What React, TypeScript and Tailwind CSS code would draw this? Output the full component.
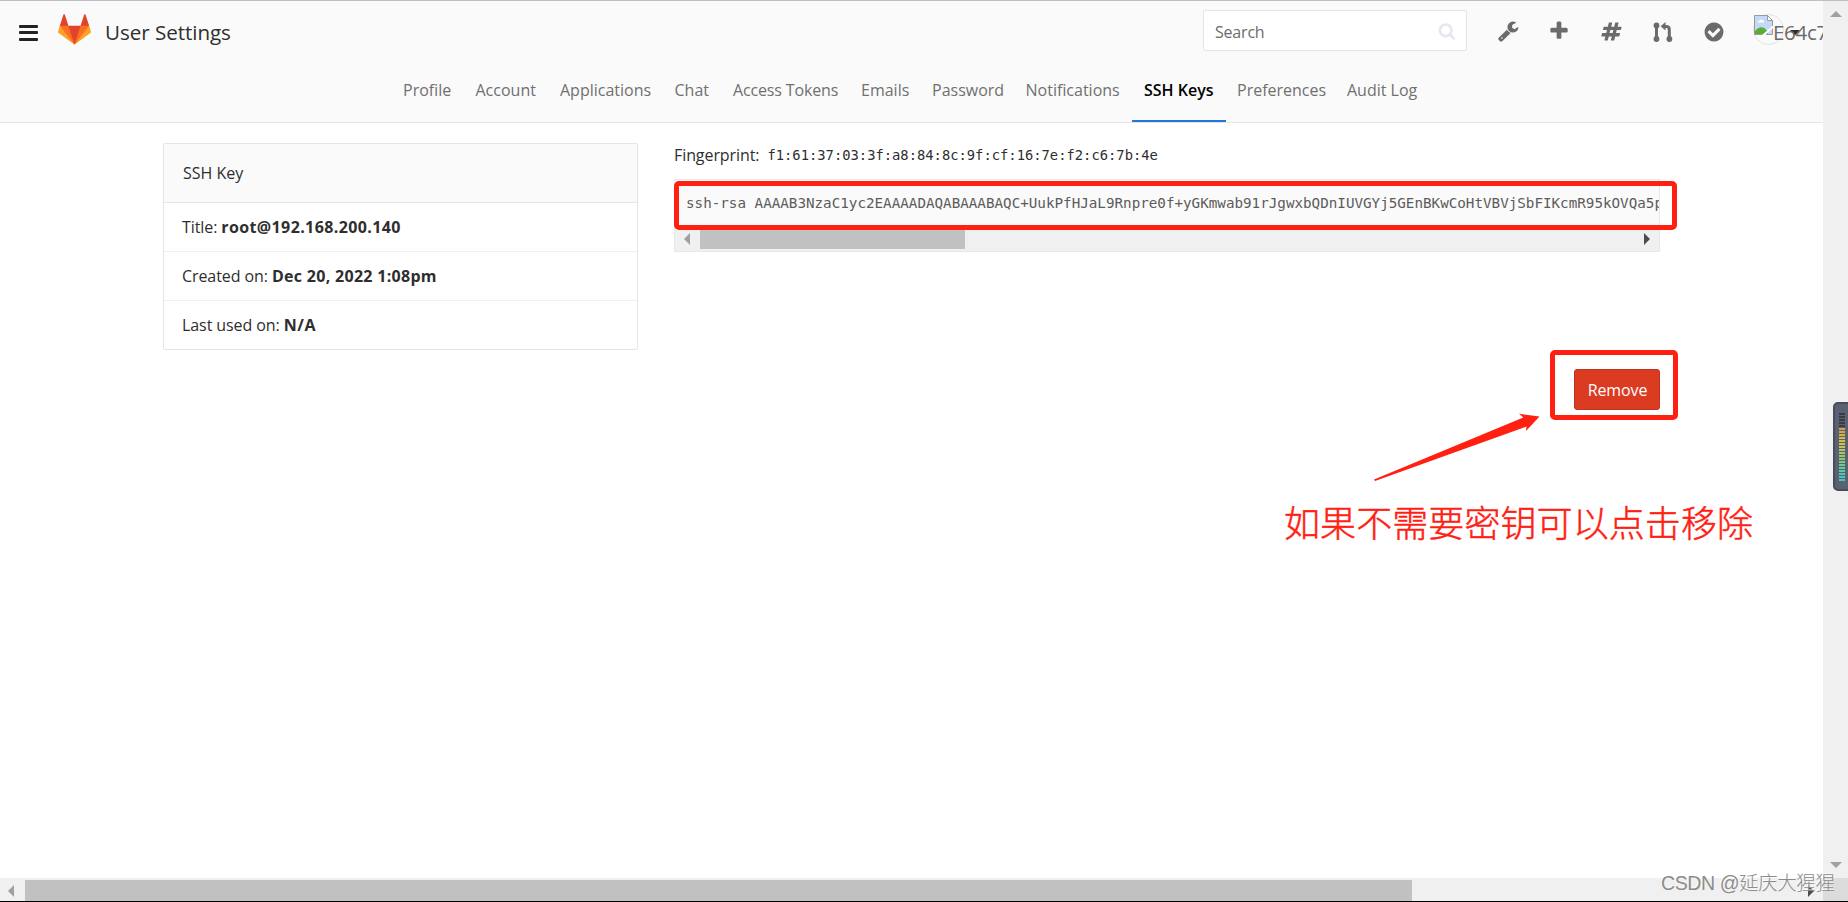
import type { ReactNode } from "react";

const tabs = [
  { label: "Profile", width: "w-[72.5px]" },
  { label: "Account", width: "w-[84.5px]" },
  { label: "Applications", width: "w-[114.5px]" },
  { label: "Chat", width: "w-[58.5px]" },
  { label: "Access Tokens", width: "w-[128px] tracking-[-0.15px]" },
  { label: "Emails", width: "w-[71px]" },
  { label: "Password", width: "w-[93.5px]" },
  { label: "Notifications", width: "w-[117.5px]" },
  { label: "SSH Keys", width: "w-[94px]", active: true },
  { label: "Preferences", width: "w-[110px]" },
  { label: "Audit Log", width: "w-[93px]" },
];

function Glyph({ d, className, box = "0 0 1792 1792" }: { d: string; className: string; box?: string }) {
  return (
    <svg viewBox={box} className={`shrink-0 ${className}`} fill="currentColor">
      <path d={d} />
    </svg>
  );
}

const WRENCH =
  "M384 1472q0-26-19-45t-45-19-45 19-19 45 19 45 45 19 45-19 19-45zm644-420l-682 682q-37 37-90 37-52 0-91-37l-106-108q-38-36-38-90 0-53 38-91l681-681q39 98 114.500 173.500t173.500 114.500zm634-435q0 39-23 106-47 134-164.500 217.500t-258.500 83.500q-185 0-316.500-131.500t-131.500-316.500 131.500-316.500 316.500-131.500q58 0 121.500 16.500t107.500 46.500q16 11 16 28t-16 28l-293 169v224l193 107q5-3 79-48.500t135.500-81 70.500-35.500q15 0 23.500 10t8.500 25z";
const PLUS =
  "M1600 736v192q0 40-28 68t-68 28h-416v416q0 40-28 68t-68 28h-192q-40 0-68-28t-28-68v-416h-416q-40 0-68-28t-28-68v-192q0-40 28-68t68-28h416v-416q0-40 28-68t68-28h192q40 0 68 28t28 68v416h416q40 0 68 28t28 68z";
const HASH =
  "M991 1024l64-256h-254l-64 256h254zm768-504l-56 224q-7 24-31 24h-327l-64 256h311q15 0 25 12 10 14 6 28l-56 224q-5 24-31 24h-327l-81 328q-7 24-31 24h-224q-16 0-26-12-9-12-6-28l78-312h-254l-81 328q-7 24-31 24h-225q-15 0-25-12-9-12-6-28l78-312h-311q-15 0-25-12-9-12-6-28l56-224q7-24 31-24h327l64-256h-311q-15 0-25-12-10-14-6-28l56-224q5-24 31-24h327l81-328q7-24 32-24h224q15 0 25 12 9 12 6 28l-78 312h254l81-328q7-24 32-24h224q15 0 25 12 9 12 6 28l-78 312h311q15 0 25 12 9 12 6 28z";
const CHECK =
  "M1412 734q0-28-18-46l-91-90q-19-19-45-19t-45 19l-408 407-226-226q-19-19-45-19t-45 19l-91 90q-18 18-18 46 0 27 18 45l362 362q19 19 45 19 27 0 46-19l543-543q18-18 18-45zm252 162q0 209-103 385.500t-279.500 279.500-385.500 103-385.500-103-279.500-279.500-103-385.500 103-385.500 279.500-279.500 385.500-103 385.500 103 279.500 279.500 103 385.500z";
const SEARCH =
  "M1216 832q0-185-131.500-316.500t-316.500-131.500-316.500 131.500-131.500 316.500 131.500 316.500 316.500 131.500 316.500-131.500 131.500-316.500zm512 832q0 52-38 90t-90 38q-54 0-90-38l-343-342q-179 124-399 124-143 0-273.500-55.500t-225-150-150-225-55.500-273.500 55.500-273.500 150-225 225-150 273.500-55.500 273.500 55.500 225 150 150 225 55.500 273.500q0 220-124 399l343 343q37 37 37 90z";

function Logo() {
  return (
    <svg viewBox="0 0 36 36" className="ml-5 h-[33px] w-[33px] shrink-0">
      <path fill="#e24329" d="M2 14l9.380 9v-9l-4-12.280c-.205-.632-1.176-.632-1.380 0z" />
      <path fill="#e24329" d="M34 14l-9.380 9v-9l4-12.280c.205-.632 1.176-.632 1.380 0z" />
      <path fill="#e24329" d="M18 34.380L3 14h30z" />
      <path fill="#fc6d26" d="M18 34.380L11.380 14H2l4 11z" />
      <path fill="#fc6d26" d="M18 34.380L24.620 14H34l-4 11z" />
      <path fill="#fca326" d="M2 14L.1 20.160c-.18.565 0 1.200.5 1.560l17.420 12.660z" />
      <path fill="#fca326" d="M34 14l1.900 6.160c.18.565 0 1.200-.5 1.560L18 34.380z" />
    </svg>
  );
}

function MergeRequests() {
  return (
    <svg viewBox="0 0 20 20" className="ml-[31px] mt-px h-5 w-5 shrink-0" fill="none" stroke="currentColor">
      <path d="M3.500 3.500V16.500" strokeWidth="3" />
      <path d="M10 4.500h3.300q3 0 3 3V16.500" strokeWidth="3" />
      <path d="M12.500 0v8.600L7.600 4.300z" fill="currentColor" stroke="none" />
      <g fill="currentColor" stroke="none">
        <circle cx="3.500" cy="3.400" r="2.900" />
        <circle cx="3.500" cy="17" r="2.900" />
        <circle cx="16.400" cy="17" r="2.900" />
      </g>
    </svg>
  );
}

function Avatar() {
  return (
    <div className="relative ml-[28px] mt-[2px] h-[31px] w-[70px] shrink-0">
      <div className="flex h-[31px] w-[31px] rounded-full border border-[#e2e2e2]">
        <svg viewBox="0 0 19 20" className="h-5 w-[19px] shrink-0">
          <path d="M.5.500h13l5 5V19.500H.5z" fill="#c3d9f7" stroke="#9b9b9b" />
          <path d="M3.500 7.500q0-1.800 2-1.800 1-2 2.600-.6 2 0 2 2.400z" fill="#fff" />
          <path d="M1 19v-3q4-4.500 7.500-3.500 4 .5 5.500 6.500z" fill="#58ad35" />
          <path d="M19 10.500V13L11.500 20H8z" fill="#fff" />
          <path d="M13.500.500v5h5z" fill="#fff" stroke="#9b9b9b" />
        </svg>
      </div>
      <svg viewBox="0 0 10 6" className="absolute left-[37px] top-4 h-[6px] w-[10px]">
        <path d="M0 0h10L5 5.500z" fill="#2e2e2e" />
      </svg>
      <span className="absolute left-[20px] top-[3px] text-[20.5px] leading-[30px] tracking-[-0.3px] text-[#6b6b6b]">E64c7</span>
    </div>
  );
}

function DetailRow({ label, children, spacing }: { label: string; children: ReactNode; spacing: string }) {
  return (
    <li className="flex h-[49px] items-center gap-1 border-b border-[#f0f0f0] px-[18px] last:h-12 last:border-b-0">
      <span className="tracking-[-0.08px]">{label}</span>
      <strong className={`font-bold ${spacing}`}>{children}</strong>
    </li>
  );
}

function Meter() {
  const colors = [
    "#383c49", "#383c49", "#383c49", "#383c49", "#383c49", "#e09a4c", "#dba648", "#d9b045", "#d6b944", "#d2be46", "#cbc34b", "#bfc653",
    "#b2c85a", "#a4c962", "#98ca6a", "#8aca74", "#7cca80", "#70ca8c", "#64c998", "#58c8a6", "#4cc8b4", "#42c8c0", "#3fcabc",
  ];
  return (
    <div className="absolute left-[1833px] top-[401px] flex h-[89px] w-[20px] flex-col gap-px rounded-[5px] border-2 border-[#474d5b] bg-[#5a6272] pl-[4px] pt-[9px]">
      {colors.map((c, i) => (
        <span key={i} className="h-[2px] w-[6px]" style={{ backgroundColor: c }} />
      ))}
    </div>
  );
}

export default function App() {
  return (
    <div className="relative flex h-[902px] w-[1848px] flex-col overflow-hidden border-b border-black border-t border-t-[#c0c0c0] bg-white font-['Open_Sans','Noto_Sans',sans-serif] text-base text-[#2e2e2e]">
      <div className="flex h-[877px] shrink-0">
        <div className="w-[1823px] shrink-0 overflow-hidden">
          <header className="h-[122px] border-b border-[#e5e5e5] bg-[#fafafa]">
            <div className="flex h-[60px] items-start pl-[19px] pt-[9px] text-[#6b6b6b]">
              <div className="mt-[15px] flex w-[19px] shrink-0 flex-col gap-[3.3px]">
                <span className="h-[3px] rounded-[1px] bg-[#222]" />
                <span className="h-[3px] rounded-[1px] bg-[#222]" />
                <span className="h-[3px] rounded-[1px] bg-[#222]" />
              </div>
              <div className="mt-[3px] flex">
                <Logo />
              </div>
              <h1 className="ml-[14px] mt-[7px] w-[1098px] shrink-0 text-[20.6px] leading-[30px] tracking-[-0.05px] text-[#2e2e2e]">User Settings</h1>
              <div className="flex h-[41px] w-[264px] shrink-0 items-center justify-between rounded-[2px] border border-[#e5e5e5] bg-white pl-[11px] pr-[10px]">
                <span className="mt-[3px] tracking-[-0.2px]">Search</span>
                <Glyph d={SEARCH} className="h-[18px] w-[18px] text-[#e4e7ed]" />
              </div>
              <div className="mt-[11px] flex">
                <Glyph d={WRENCH} className="ml-[30.5px] mt-[-1px] h-[22px] w-[22px]" />
                <Glyph d={PLUS} className="ml-[28.5px] mt-[-1px] h-[22px] w-[22px]" />
                <Glyph d={HASH} className="ml-[31px] mt-[-0.5px] h-[21px] w-[21px]" />
                <MergeRequests />
                <Glyph d={CHECK} className="ml-[30px] mt-[-0.5px] h-[22px] w-[22px]" />
              </div>
              <div className="mt-[2px] flex">
                <Avatar />
              </div>
            </div>
            <nav className="flex h-[61px] pl-[392px]">
              {tabs.map((t) => (
                <a
                  key={t.label}
                  className={`flex h-[61px] shrink-0 items-center whitespace-nowrap pb-[3px] ${t.width} ${
                    t.active ? "border-b-2 border-[#1f78d1] pl-[12px] font-semibold text-black" : "pl-[11px] text-[#707070]"
                  }`}
                >
                  <span className={t.active ? "mt-[2px]" : ""}>{t.label}</span>
                </a>
              ))}
            </nav>
          </header>

          <main className="flex pl-[163px] pt-5">
            <section className="h-[207px] w-[475px] shrink-0 rounded-[2px] border border-[#e5e5e5]">
              <h2 className="flex h-[59px] items-center border-b border-[#e5e5e5] bg-[#fafafa] pl-[19px]">SSH Key</h2>
              <ul>
                <DetailRow label="Title:" spacing="tracking-[0.38px]">root@192.168.200.140</DetailRow>
                <DetailRow label="Created on:" spacing="tracking-[0.3px]">Dec 20, 2022 1:08pm</DetailRow>
                <DetailRow label="Last used on:" spacing="tracking-[0.6px]">N/A</DetailRow>
              </ul>
            </section>

            <section className="ml-9 flex w-[986px] shrink-0 flex-col items-start">
              <p className="flex h-6 items-center tracking-[-0.08px]">
                Fingerprint:
                <code className="ml-[8px] font-['DejaVu_Sans_Mono',monospace] text-[13.8px] tracking-normal">
                  f1:61:37:03:3f:a8:84:8c:9f:cf:16:7e:f2:c6:7b:4e
                </code>
              </p>
              <div className="mt-3 h-[73px] w-[986px] border border-[#e8e8e8] bg-[#fafafa]">
                <pre className="h-[50px] overflow-hidden pl-[11px] pt-[11px] font-['DejaVu_Sans_Mono',monospace] text-[14.24px] leading-6 text-[#5c5c5c]">
                  ssh-rsa AAAAB3NzaC1yc2EAAAADAQABAAABAQC+UukPfHJaL9Rnpre0f+yGKmwab91rJgwxbQDnIUVGYj5GEnBKwCoHtVBVjSbFIKcmR95kOVQa5p
                </pre>
                <div className="flex h-[21px] items-start justify-between bg-[#f0f0f0] pl-[9px] pr-[9px]">
                  <div className="flex">
                    <svg viewBox="0 0 6 12" className="mt-[3px] h-3 w-[6px]">
                      <path d="M6 0v12L0 6z" fill="#a0a0a0" />
                    </svg>
                    <span className="ml-[10px] h-[19px] w-[265px] bg-[#c1c1c1]" />
                  </div>
                  <svg viewBox="0 0 6 12" className="mt-[3px] h-3 w-[6px]">
                    <path d="M0 0v12l6-6z" fill="#4d4d4d" />
                  </svg>
                </div>
              </div>
              <button className="mt-[117px] flex h-[41px] w-[86px] items-center justify-center self-end rounded-[3px] border border-[#c0341d] bg-[#db3b21] pl-px tracking-[-0.1px] text-white">
                Remove
              </button>
            </section>
          </main>
        </div>

        <div className="flex w-[25px] shrink-0 flex-col items-center justify-between bg-[#f0f0f0] pb-[10px] pt-[10px]">
          <svg viewBox="0 0 12 6" className="h-[6px] w-3">
            <path d="M0 6h12L6 0z" fill="#a0a0a0" />
          </svg>
          <svg viewBox="0 0 12 6" className="h-[6px] w-3">
            <path d="M0 0h12L6 6z" fill="#a0a0a0" />
          </svg>
        </div>
      </div>

      <div className="flex h-[23px] shrink-0">
        <div className="flex w-[1823px] items-center bg-[#f0f0f0] pl-2">
          <svg viewBox="0 0 6 12" className="mt-0.5 h-3 w-[6px]">
            <path d="M6 0v12L0 6z" fill="#a0a0a0" />
          </svg>
          <span className="ml-[11px] mt-[2px] h-[21px] w-[1387px] bg-[#c1c1c1]" />
          <svg viewBox="0 0 6 12" className="ml-[396px] mt-0.5 h-3 w-[6px]">
            <path d="M0 0v12l6-6z" fill="#4d4d4d" />
          </svg>
        </div>
        <div className="w-[25px] bg-[#dcdcdc]" />
      </div>

      <div className="absolute left-[674px] top-[180px] h-[49px] w-[1003px] rounded-[5px] border-[5px] border-[#ff2012]" />
      <div className="absolute left-[1550px] top-[349px] h-[70px] w-[128px] rounded-[5px] border-[5px] border-[#ff2012]" />
      <svg viewBox="0 0 168 70" className="absolute left-[1373px] top-[412px] h-[70px] w-[168px]">
        <path d="M1 66.500L150.300 4.500 146 .8 166.500 3.500 153 18 153.500 13.500 2 68z" fill="#ff2012" />
      </svg>
      <p className="absolute left-[1284px] top-[493px] whitespace-nowrap font-['Noto_Sans_CJK_SC',sans-serif] text-[36px] font-light leading-[54px] tracking-[0.08px] text-[#ff2012] [-webkit-text-stroke:0.5px_#ff2012]">
        如果不需要密钥可以点击移除
      </p>
      <Meter />
      <p className="absolute left-[1661px] top-[867px] whitespace-nowrap font-['Liberation_Sans','Noto_Sans_CJK_SC',sans-serif] text-[19.5px] font-light leading-[30px] tracking-[-0.4px] text-[#8c8c8c] [text-shadow:-1px_-1px_0_#ffffffb0]">
        CSDN @延庆大猩猩
      </p>
    </div>
  );
}
